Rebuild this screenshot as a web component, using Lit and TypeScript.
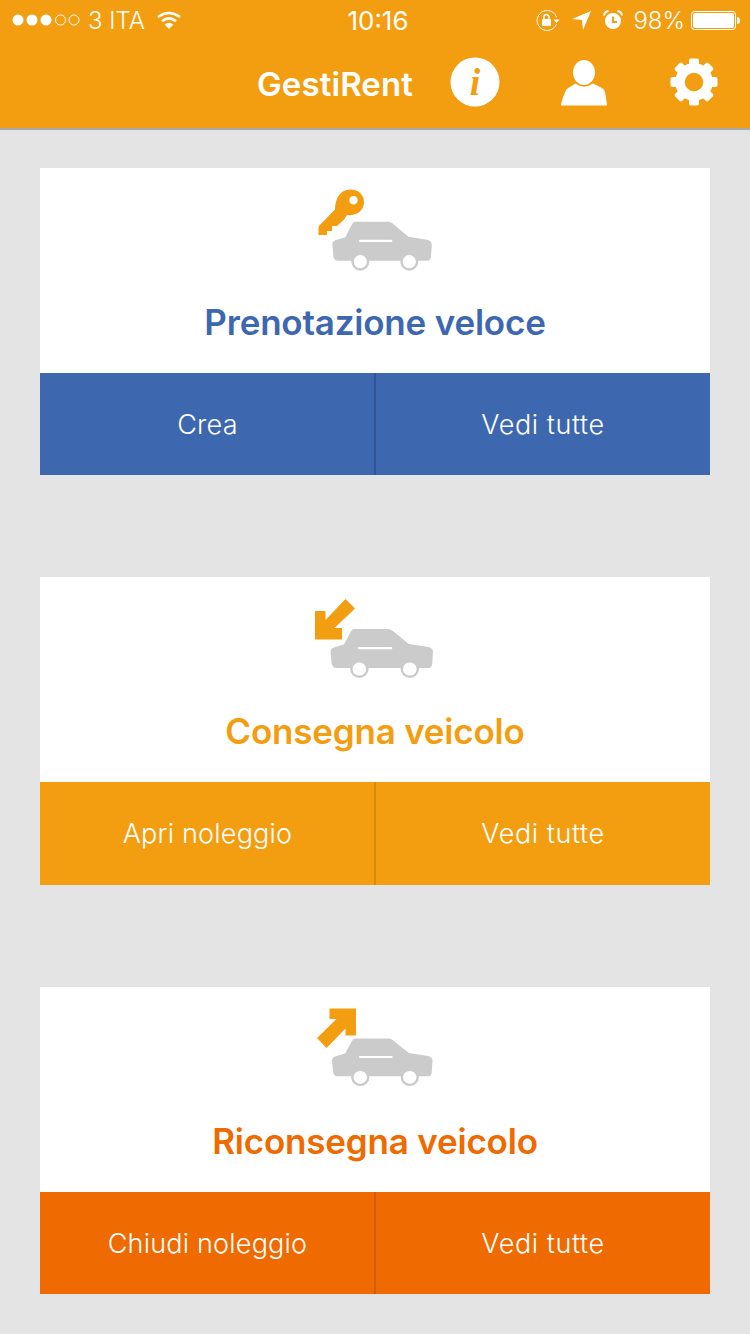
import { LitElement, html, css, svg } from "lit";
import { customElement } from "lit/decorators.js";

const carShape = svg`
  <path d="M22.7 0H56Q58 0 60 1.5L76 15L95 18Q99.5 19 99.5 23L98.7 35Q98.3 39 95 39H6Q2 39 1.2 35L0 23Q0 19.5 3 18.5L13 15.5L19.5 3Q21 0 22.7 0Z" fill="#cbcbcb"/>
  <rect x="26.5" y="18" width="33.5" height="2.2" rx="1" fill="#fff"/>
  <circle cx="28" cy="40" r="9" fill="#cbcbcb"/><circle cx="28" cy="40" r="6.6" fill="#fff"/>
  <circle cx="77" cy="40" r="9" fill="#cbcbcb"/><circle cx="77" cy="40" r="6.6" fill="#fff"/>`;

const icons = [
  svg`<path fill-rule="evenodd" fill="#f39e11" d="M35 29.5C35 18 41 9.5 50 9.5C59 9.5 64 15 64 22C64 31 56 36 47 35L44.5 39L37 46L32 46L32 51L27 51L27 55H18.5V46.5L35 29.5ZM53.5 16A4.2 4.2 0 1 0 53.5 24.4A4.2 4.2 0 1 0 53.5 16Z"/>
      <g transform="translate(32.3 41.7)">${carShape}</g>`,
  svg`<path fill="#f39e11" d="M15 21H25.5V30L45.5 9L55 18.5L34.5 38H42V49.5H15Z"/>
      <g transform="translate(30.5 39) scale(1.03 1)">${carShape}</g>`,
  svg`<path fill="#f39e11" d="M29.5 8.5H56V35.5H45.5V28.5L26.5 48L17 38L36.5 19H29.5Z"/>
      <g transform="translate(32 38.5) scale(1.01 .97)">${carShape}</g>`,
];

const gearTeeth = [0, 45, 90, 135, 180, 225, 270, 315].map(
  (a) => svg`<rect x="19" y="0.5" width="10" height="12" rx="2" fill="#fff" transform="rotate(${a} 24 24)"/>`
);

const cards = [
  { tone: "blue", title: "Prenotazione veloce", action: "Crea", tall: false },
  { tone: "amber", title: "Consegna veicolo", action: "Apri noleggio", tall: true },
  { tone: "red", title: "Riconsegna veicolo", action: "Chiudi noleggio", tall: false },
];

@customElement("app-root")
export class AppRoot extends LitElement {
  static styles = css`
    :host { display: block; min-height: 1334px; background: #e4e4e4; font-family: Inter, "Noto Sans", sans-serif; color: #fff; }
    header { height: 128px; background: #f39e11; border-bottom: 2px solid #a9a9a9; display: flex; flex-direction: column; }
    .status { height: 40px; display: grid; grid-template-columns: 1fr auto 1fr; align-items: center; font-size: 24px; font-weight: 300; padding: 0 10px 0 12px; }
    .status svg { display: block; flex: none; }
    .left, .right { display: flex; align-items: center; }
    .left { gap: 8px; }
    .left .wifi { margin-left: 4px; }
    .time { font-weight: 400; font-size: 26px; margin-left: 4px; }
    .right { justify-content: flex-end; }
    .right .loc { margin-left: 12px; }
    .right .alarm { margin-left: 12px; }
    .pct { margin-left: 10px; margin-right: 6px; }
    nav { flex: 1; display: flex; align-items: center; justify-content: flex-end; padding: 0 32px 4px 0; }
    nav svg { display: block; flex: none; }
    .brand { font-size: 33px; font-weight: 600; letter-spacing: 0.1px; margin: 4px 37px 0 0; }
    .user { margin: 2px 0 0 61px; }
    .gear { margin-left: 63px; }
    main { padding: 38px 40px 0; display: flex; flex-direction: column; gap: 102px; }
    .card { display: flex; flex-direction: column; }
    .body { height: 205px; background: #fff; display: flex; flex-direction: column; align-items: center; padding-top: 12px; box-sizing: border-box; }
    .body.t13 { padding-top: 13px; }
    .body svg { display: block; }
    h2 { margin: 22px 0 0; font-size: 35px; font-weight: 600; line-height: 40px; letter-spacing: -0.2px; }
    .t13 h2 { margin-top: 21px; }
    .band { height: 102px; display: grid; grid-template-columns: 1fr 1fr; }
    .tall .band { height: 103px; }
    .band div { display: flex; align-items: center; justify-content: center; font-size: 27px; font-weight: 350; letter-spacing: 0.2px; }
    .band div + div { border-left: 2px solid var(--line); margin-left: -1px; letter-spacing: 0.6px; }
    .blue h2 { color: #3d68b0; }
    .blue .band { background: #3d68b0; --line: #2f5596; }
    .amber h2 { color: #f39e11; }
    .amber .band { background: #f39e11; --line: #d98a0c; }
    .red h2 { color: #ef6a00; }
    .red .band { background: #ef6a00; --line: #d25c00; }
  `;

  render() {
    return html`
      <header>
        <div class="status">
          <div class="left">
            <svg width="68" height="14" viewBox="0 0 68 14">
              <g fill="#fff"><circle cx="6" cy="7" r="5.5"/><circle cx="20" cy="7" r="5.5"/><circle cx="34" cy="7" r="5.5"/></g>
              <g fill="none" stroke="#fff" stroke-width="1"><circle cx="48.5" cy="7" r="5"/><circle cx="62" cy="7" r="5"/></g>
            </svg>
            <span>3 ITA</span>
            <svg class="wifi" width="24" height="18" viewBox="0 0 24 18" fill="none" stroke="#fff" stroke-width="2.6">
              <path d="M1 6Q12 -2 23 6"/><path d="M5 10.2Q12 4.5 19 10.2"/>
              <path d="M12 18L7.6 13.5Q12 10 16.4 13.5Z" fill="#fff" stroke="none"/>
            </svg>
          </div>
          <span class="time">10:16</span>
          <div class="right">
            <svg width="24" height="21" viewBox="0 0 24 21">
              <path d="M20.5 7A10 10 0 1 0 20.5 14" fill="none" stroke="#fff" stroke-width="1"/>
              <path d="M17.5 9.5H23.5L20.5 13Z" fill="#fff"/>
              <rect x="6" y="9" width="9" height="7" rx="1" fill="#fff"/>
              <path d="M8 9V7A2.5 2.5 0 0 1 13 7V9" fill="none" stroke="#fff" stroke-width="1.4"/>
            </svg>
            <svg class="loc" width="19" height="19" viewBox="0 0 19 19"><path d="M19 0L11 19L10 9L0 8Z" fill="#fff"/></svg>
            <svg class="alarm" width="20" height="20" viewBox="0 0 20 20">
              <path fill-rule="evenodd" fill="#fff" d="M10 3A8 8 0 1 0 10 19A8 8 0 1 0 10 3ZM9 6.5H11V11H14V13H9Z"/>
              <path d="M1 5.5Q1.5 1.5 5.5 1" fill="none" stroke="#fff" stroke-width="2"/>
              <path d="M19 5.5Q18.5 1.5 14.5 1" fill="none" stroke="#fff" stroke-width="2"/>
            </svg>
            <span class="pct">98%</span>
            <svg width="49" height="19" viewBox="0 0 49 19">
              <rect x="0.5" y="0.5" width="44" height="18" rx="3" fill="none" stroke="#fff"/>
              <rect x="2" y="2" width="41" height="15" rx="2" fill="#fff"/>
              <path d="M46 6Q49 6 49 9.5Q49 13 46 13Z" fill="#fff"/>
            </svg>
          </div>
        </div>
        <nav>
          <span class="brand">GestiRent</span>
          <svg width="50" height="50" viewBox="0 0 50 50">
            <circle cx="25" cy="25" r="24.5" fill="#fff"/>
            <text x="25" y="38" text-anchor="middle" fill="#f39e11" font-family="Liberation Serif, serif" font-size="38" font-style="italic" font-weight="700">i</text>
          </svg>
          <svg class="user" width="46" height="46" viewBox="0 0 46 46">
            <ellipse cx="23" cy="12.5" rx="11" ry="12.5" fill="#fff"/>
            <path d="M14.5 23.5Q23 30 32 23.5L41 28Q43 29 44 32L46 44.5Q46 45.5 45 45.5H1Q0 45.5 0 44.5Q2 36 5 30Q6 28.5 8 27.5Z" fill="#fff"/>
          </svg>
          <svg class="gear" width="48" height="48" viewBox="0 0 48 48">
            ${gearTeeth}
            <circle cx="24" cy="24" r="14" fill="none" stroke="#fff" stroke-width="9.5"/>
          </svg>
        </nav>
      </header>
      <main>
        ${cards.map(
          (c, i) => html`
            <section class="card ${c.tone} ${c.tall ? "tall" : ""}">
              <div class="body ${i ? "t13" : ""}">
                <svg width="150" height="100" viewBox="0 0 150 100">${icons[i]}</svg>
                <h2>${c.title}</h2>
              </div>
              <div class="band"><div>${c.action}</div><div>Vedi tutte</div></div>
            </section>
          `
        )}
      </main>
    `;
  }
}
